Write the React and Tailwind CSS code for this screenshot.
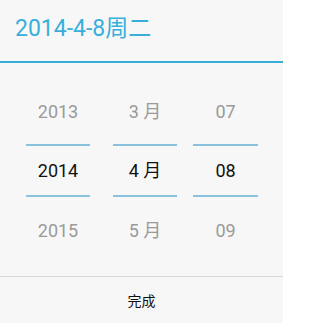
import React from "react";

const columns = [
  { items: ["2013", "2014", "2015"], width: "w-[64px]", gap: "ml-0" },
  { items: ["3 月", "4 月", "5 月"], width: "w-[64px]", gap: "ml-[23px]" },
  { items: ["07", "08", "09"], width: "w-[65px]", gap: "ml-[16px]" },
];

const PickerColumn = ({ items, width, gap }) => (
  <div className={`flex flex-col ${width} ${gap}`}>
    <div className="h-[63px] pb-[3px] flex items-center justify-center text-[18px] text-[#9a9a9a]">
      {items[0]}
    </div>
    <div className="h-[2px] bg-[#8ac2dc]" />
    <div className="h-[49px] flex items-center justify-center text-[18px] text-[#111]">
      {items[1]}
    </div>
    <div className="h-[2px] bg-[#8ac2dc]" />
    <div className="h-[67px] flex items-center justify-center text-[18px] text-[#9a9a9a]">
      {items[2]}
    </div>
  </div>
);

export default function App() {
  return (
    <div
      className="w-[283px] h-[323px] bg-[#f7f7f7] flex flex-col"
      style={{ fontFamily: "Roboto, 'Noto Sans CJK SC', sans-serif" }}
    >
      {/* Title */}
      <div className="h-[61px] pl-[15px] pb-[2px] flex items-center text-[23px] text-[#38afdb]">
        2014-4-8周二
      </div>
      <div className="h-[2px] bg-[#36aed9]" />

      {/* Pickers */}
      <div className="flex pl-[26px] pt-[18px] h-[213px]">
        {columns.map((col, i) => (
          <PickerColumn key={i} {...col} />
        ))}
      </div>

      {/* Footer */}
      <div className="h-px bg-[#d9d9d9]" />
      <div className="flex-1 flex items-center justify-center pt-[3px] text-[14px] text-[#111]">
        完成
      </div>
    </div>
  );
}
